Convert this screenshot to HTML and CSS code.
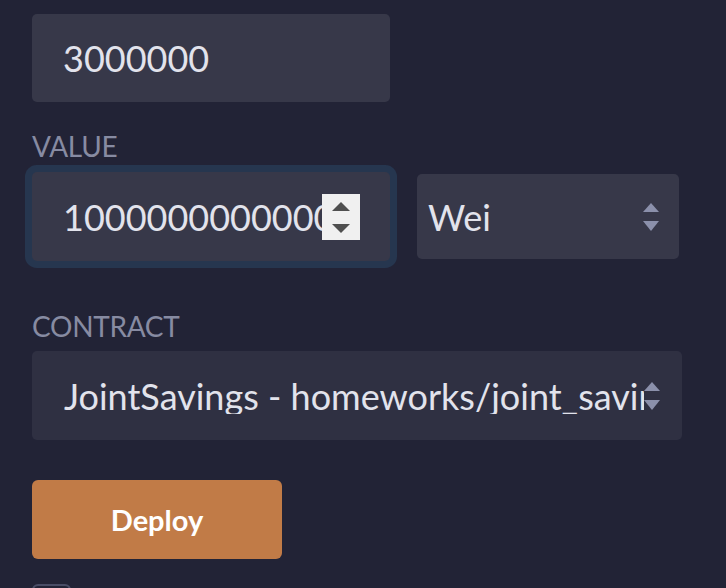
FILE: index.html
```html
<!DOCTYPE html>
<html>
<head>
<meta charset="utf-8">
<link rel="stylesheet" href="styles.css">
</head>
<body>
<div class="panel">
  <div class="field gas">
    <span class="field-text">3000000</span>
  </div>

  <div class="label label-value">VALUE</div>
  <div class="value-row">
    <div class="field value focused">
      <span class="field-text clip">1000000000000000000</span>
      <span class="spinner">
        <svg width="38" height="46" viewBox="0 0 38 46">
          <polygon points="10,17 19,8 28,17" fill="#4f4f4f"/>
          <polygon points="10,30 28,30 19,39" fill="#4f4f4f"/>
        </svg>
      </span>
    </div>
    <div class="field select unit">
      <span class="field-text">Wei</span>
      <svg class="arrows" width="16" height="30" viewBox="0 0 16 30">
        <polygon points="0,10 8,1 16,10" fill="#8b90ab"/>
        <polygon points="0,19 16,19 8,29" fill="#8b90ab"/>
      </svg>
    </div>
  </div>

  <div class="label label-contract">CONTRACT</div>
  <div class="field select contract">
    <span class="field-text clip">JointSavings - homeworks/joint_savings.sol</span>
    <svg class="arrows" width="16" height="30" viewBox="0 0 16 30">
      <polygon points="0,10 8,1 16,10" fill="#8b90ab"/>
      <polygon points="0,19 16,19 8,29" fill="#8b90ab"/>
    </svg>
  </div>

  <button class="deploy">Deploy</button>

  <div class="checkbox"></div>
</div>
</body>
</html>
```

FILE: styles.css
```css
* { box-sizing: border-box; }

html, body {
  margin: 0;
  padding: 0;
  background: #222336;
  height: 100%;
  overflow: hidden;
}

.panel {
  display: flex;
  flex-direction: column;
  align-items: flex-start;
  padding: 14px 0 0 32px;
  font-family: Lato, "Noto Sans", sans-serif;
  color: #e2e3ec;
}

.field {
  display: flex;
  align-items: center;
  background: #373849;
  border-radius: 5px;
  overflow: hidden;
}

.field-text {
  font-size: 36px;
  white-space: nowrap;
  line-height: 1;
}

.clip {
  overflow: hidden;
  flex: 1;
  min-width: 0;
}

.gas {
  width: 358px;
  height: 88px;
  padding-left: 31px;
}

.label {
  font-size: 28px;
  line-height: 34px;
  color: #878ba2;
  letter-spacing: -0.3px;
}

.label-value {
  margin-top: 27px;
}

.value-row {
  display: flex;
  align-items: center;
  gap: 27px;
  margin-top: 9px;
}

.value {
  width: 358px;
  height: 89px;
  padding-left: 31px;
  padding-right: 30px;
  box-shadow: 0 0 0 7px #26364f;
  overflow: visible;
}

.spinner {
  flex: none;
  width: 38px;
  height: 46px;
  background: #f0f0f0;
  display: block;
}
.spinner svg { display: block; }

.select {
  padding-left: 11px;
}

.unit {
  width: 262px;
  height: 85px;
  justify-content: space-between;
  padding-right: 20px;
}

.arrows { flex: none; display: block; }

.label-contract {
  margin-top: 48px;
}

.contract {
  margin-top: 8px;
  width: 650px;
  height: 89px;
  padding-left: 32px;
  padding-right: 22px;
  background: #2f3042;
}
.contract .field-text { padding-right: 3px; }

.deploy {
  margin-top: 40px;
  width: 250px;
  height: 79px;
  border: none;
  border-radius: 6px;
  background: #c17b47;
  color: #ffffff;
  font-family: Lato, "Noto Sans", sans-serif;
  font-weight: 700;
  font-size: 29px;
  padding: 0;
}

.checkbox {
  margin-top: 25px;
  width: 39px;
  height: 39px;
  border: 2px solid #4a4d66;
  border-radius: 6px;
  flex: none;
}
```
